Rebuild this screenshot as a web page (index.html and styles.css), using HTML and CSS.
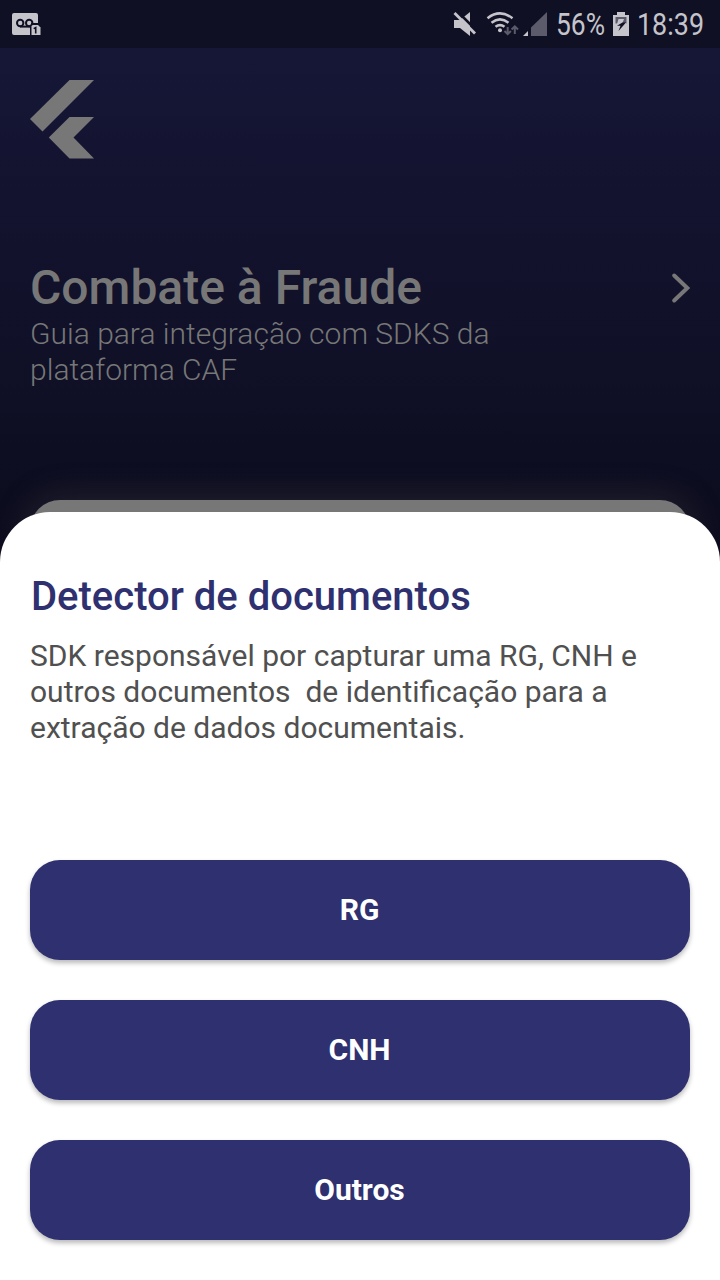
FILE: index.html
```html
<!DOCTYPE html>
<html lang="pt-BR">
<head>
<meta charset="utf-8">
<title>Combate à Fraude</title>
<link rel="stylesheet" href="styles.css">
</head>
<body>
<div class="screen">
  <header class="status">
    <svg class="voicemail" width="30" height="26" viewBox="11 11 30 26">
      <path class="lit" d="M14 13h22q2 0 2 2v8h-7v12H14q-2 0-2-2V15q0-2 2-2z"/>
      <g class="tape"><circle cx="20.2" cy="23" r="3.2"/><circle cx="29.2" cy="23" r="3.2"/><path d="M20 26.600h10"/></g>
      <path class="cutout" d="M30 36V26q0-2 2-2h7l3 3v9z"/>
      <path class="lit" d="M31.500 35V26.500q0-1.500 1.500-1.500h5l2.500 2.500V35z"/>
      <path class="one" d="M33.700 28.600l2-1v5.800"/>
    </svg>
    <svg class="indicators" width="268" height="48" viewBox="452 0 268 48">
      <path class="lit" d="M454 20h6l10-8v24l-10-8h-6z"/>
      <path class="slash-gap" d="M456.500 10.500l22 22"/>
      <path class="slash" d="M454.500 13l20.500 20.500"/>
      <g class="wifi"><path d="M487.500 18.200q12.500-9.500 25 0"/><path d="M491.500 22.700q8.500-6.500 17 0"/><path d="M495.500 26.700q4.500-3.200 9 0"/></g>
      <circle class="lit" cx="500" cy="30.200" r="2"/>
      <path class="traffic" d="M507.700 27v7M504.500 31l3.200 3.200 3.200-3.200M514.800 34v-7M511.600 29.500l3.200-3.200 3.200 3.200"/>
      <path class="dim" d="M531 36V27.500L547 12v24z"/>
      <path class="lit" d="M523 36l5-5v5z"/>
      <text x="556" y="35.300" textLength="49" lengthAdjust="spacingAndGlyphs">56%</text>
      <path class="lit" d="M613 15h4v-3h8v3h4v21h-16z"/>
      <path class="dim" d="M615.500 17h11v6.500h-11z"/>
      <path class="lit" d="M618.500 19h5.500l-1.500 4h3.500v1h-9z"/>
      <path class="bolt" d="M622.500 22.500h3.500L618.500 31l2-5.300h-3.500z"/>
      <text x="637" y="35.300" textLength="67" lengthAdjust="spacingAndGlyphs">18:39</text>
    </svg>
  </header>
  <main class="home">
    <svg class="logo" width="64" height="80" viewBox="30 79 64 80">
      <path d="M69.500 80H94L42.500 131.500 30 119z"/>
      <path d="M69.500 117H94L73.500 137.500 94 158.500H69.500L48.800 137.500z"/>
    </svg>
    <section class="guide">
      <div>
        <h1>Combate à Fraude</h1>
        <p>Guia para integração com SDKS da<br>plataforma CAF</p>
      </div>
      <svg class="chevron" width="20" height="32" viewBox="671 272 20 32"><path d="M674.200 275.500L687.300 288l-13.100 12.500"/></svg>
    </section>
    <div class="card"></div>
  </main>
  <section class="sheet">
    <h2>Detector de documentos</h2>
    <p>SDK responsável por capturar uma RG, CNH e<br>outros documentos&nbsp; de identificação para a<br>extração de dados documentais.</p>
    <div class="actions">
      <button>RG</button>
      <button>CNH</button>
      <button>Outros</button>
    </div>
  </section>
</div>
</body>
</html>
```
FILE: styles.css
```css
* { box-sizing: border-box; }
body { margin: 0; font-family: Roboto, sans-serif; }
h1, h2, p { margin: 0; }
svg { display: block; }
.screen {
  position: relative;
  width: 720px;
  height: 1280px;
  overflow: hidden;
  background: linear-gradient(#161637 48px, #0c0c1d 560px);
}
.status {
  display: flex;
  justify-content: space-between;
  align-items: flex-start;
  height: 48px;
  padding-left: 11px;
  background: #101024;
}
.voicemail { margin-top: 11px; }
.lit { fill: #c5c4cb; }
.dim { fill: #5c5b6b; }
.tape { fill: none; stroke: #101024; stroke-width: 2; }
.cutout { fill: #101024; }
.one { fill: none; stroke: #101024; stroke-width: 1.600; }
.slash-gap { stroke: #101024; stroke-width: 2.500; }
.slash { stroke: #c5c4cb; stroke-width: 2.800; }
.wifi { fill: none; stroke: #c5c4cb; stroke-width: 2.600; }
.traffic { fill: none; stroke: #5c5b6b; stroke-width: 2; }
.bolt { fill: #101024; }
.indicators text { fill: #c5c4cb; font-size: 31px; }
.home {
  display: flex;
  flex-direction: column;
  padding: 31px 30px 0;
}
.logo { fill: #777; }
.guide {
  display: flex;
  justify-content: space-between;
  height: 241px;
  margin-top: 100px;
  color: #777;
}
.guide h1 { font-size: 48px; font-weight: 500; line-height: 57px; }
.guide p { font-size: 30px; font-weight: 300; line-height: 36px; }
.chevron { margin: 13px -1px 0 0; fill: none; stroke: #777; stroke-width: 4; stroke-linecap: round; }
.card {
  height: 100px;
  border-radius: 30px;
  background: #777;
  box-shadow: 0 0 36px rgba(119, 110, 95, .25);
}
.sheet {
  position: absolute;
  left: 0;
  right: 0;
  bottom: 0;
  height: 768px;
  padding: 61px 30px 0;
  border-radius: 50px 50px 0 0;
  background: #fff;
}
.sheet h2 { padding-left: 1px; font-size: 40px; font-weight: 500; line-height: 48px; color: #2e3070; }
.sheet p { margin-top: 17px; font-size: 30px; line-height: 36px; color: #505050; }
.actions { display: flex; flex-direction: column; gap: 40px; margin-top: 114px; }
.actions button {
  height: 100px;
  padding: 0 1px 0 0;
  border: 0;
  border-radius: 30px;
  background: #2e3070;
  box-shadow: 0 3px 5px rgba(0, 0, 0, .28);
  color: #fff;
  font: 700 30px/36px Roboto, sans-serif;
}
```
